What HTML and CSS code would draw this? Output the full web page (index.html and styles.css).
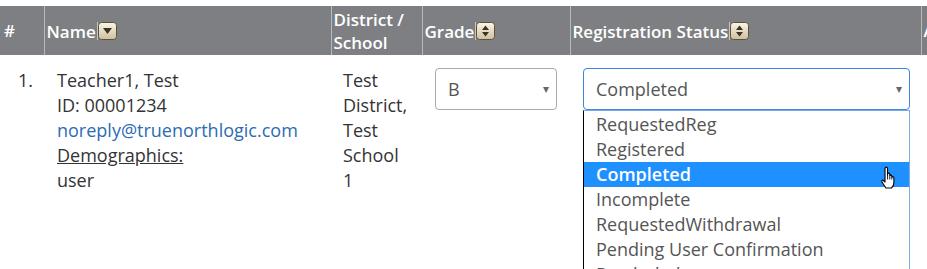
FILE: index.html
```html
<!DOCTYPE html>
<html lang="en">
<head>
    <meta charset="UTF-8">
    <title>Registrations</title>
    <link rel="stylesheet" href="styles.css">
</head>
<body>
    <table class="reg-table">
        <thead>
            <tr>
                <th class="col-num">#</th>
                <th class="col-name"><span class="th-label">Name</span><span class="caret-line"></span><svg class="sort-btn" width="19" height="18" viewBox="0 0 19 18"><defs><linearGradient id="g1" x1="0" y1="0" x2="0" y2="1"><stop offset="0" stop-color="#fbf6e8"/><stop offset="1" stop-color="#cdbf9c"/></linearGradient></defs><rect x="0.5" y="0.5" width="18" height="17" rx="3" fill="url(#g1)" stroke="#5e5138"/><path d="M5 6 L14 6 L9.5 12 Z" fill="#3b3225"/></svg></th>
                <th class="col-district">District / School</th>
                <th class="col-grade"><span class="th-label">Grade</span><span class="caret-line"></span><svg class="sort-btn" width="19" height="18" viewBox="0 0 19 18"><defs><linearGradient id="g2" x1="0" y1="0" x2="0" y2="1"><stop offset="0" stop-color="#fbf6e8"/><stop offset="1" stop-color="#cdbf9c"/></linearGradient></defs><rect x="0.5" y="0.5" width="18" height="17" rx="3" fill="url(#g2)" stroke="#5e5138"/><path d="M6 8 L13 8 L9.5 3.5 Z M6 10 L13 10 L9.5 14.5 Z" fill="#3b3225"/></svg></th>
                <th class="col-status"><span class="th-label">Registration Status</span><span class="caret-line"></span><svg class="sort-btn" width="19" height="18" viewBox="0 0 19 18"><defs><linearGradient id="g3" x1="0" y1="0" x2="0" y2="1"><stop offset="0" stop-color="#fbf6e8"/><stop offset="1" stop-color="#cdbf9c"/></linearGradient></defs><rect x="0.5" y="0.5" width="18" height="17" rx="3" fill="url(#g3)" stroke="#5e5138"/><path d="M6 8 L13 8 L9.5 3.5 Z M6 10 L13 10 L9.5 14.5 Z" fill="#3b3225"/></svg></th>
                <th class="col-action">Actions</th>
            </tr>
        </thead>
        <tbody>
            <tr>
                <td class="cell-num">1.</td>
                <td class="cell-name">
                    Teacher1, Test<br>
                    ID: 00001234<br>
                    <a href="#" class="email">noreply@truenorthlogic.com</a><br>
                    <span class="demo">Demographics:</span><br>
                    user
                </td>
                <td class="cell-district">Test District, Test School 1</td>
                <td class="cell-grade">
                    <div class="fake-select grade-select">B<span class="arrow">&#9662;</span></div>
                </td>
                <td class="cell-status">
                    <div class="status-wrap">
                        <div class="fake-select status-select focused">Completed<span class="arrow">&#9662;</span></div>
                        <ul class="dropdown">
                            <li>RequestedReg</li>
                            <li>Registered</li>
                            <li class="selected">Completed
                                <svg class="hand" width="18" height="24" viewBox="0 0 18 24"><path d="M5.5 1.5 C6.5 0.8 7.5 1.2 7.5 2.5 L7.5 9 L7.8 7.5 C8.5 6.8 9.7 7 9.8 8.2 L9.8 9.5 C10.5 8.8 11.7 9 11.8 10.2 L11.8 11 C12.5 10.4 13.8 10.6 13.9 11.8 L13.9 16.5 C13.9 19 12.5 21 11.5 22 L6 22 C5 20.5 3.5 18.5 2 16 C1.3 14.8 2.3 13.6 3.5 14.5 L5 16 L5 2.5 Z" fill="#fff" stroke="#000" stroke-width="1.1" stroke-linejoin="round"/><path d="M7.6 9 L7.6 13.5 M9.8 9.5 L9.8 13.5 M11.8 11 L11.8 13.5" stroke="#000" stroke-width="0.9"/></svg>
                            </li>
                            <li>Incomplete</li>
                            <li>RequestedWithdrawal</li>
                            <li>Pending User Confirmation</li>
                            <li>Precluded</li>
                        </ul>
                    </div>
                </td>
                <td class="cell-action"></td>
            </tr>
        </tbody>
    </table>
</body>
</html>
```

FILE: styles.css
```css
body {
    margin: 0;
    padding-top: 6px;
    font-family: "Open Sans", Arial, sans-serif;
    font-size: 18px;
    color: #333;
    background-color: white;
    overflow: hidden;
    width: 927px;
    height: 269px;
}
.reg-table {
    border-collapse: collapse;
    table-layout: fixed;
    width: 1050px;
}
.reg-table th,
.reg-table td {
    box-sizing: border-box;
}
.reg-table th {
    background-color: #7e7f83;
    color: white;
    font-weight: 600;
    font-size: 17px;
    line-height: 23px;
    text-align: left;
    vertical-align: middle;
    height: 49px;
    padding: 0 2px;
    border-left: 1px solid #b9babd;
    white-space: nowrap;
    overflow: hidden;
}
.reg-table th:first-child {
    border-left: none;
    padding-left: 4px;
}
.col-num { width: 44px; }
.col-name { width: 287px; }
.col-district { width: 91px; white-space: normal !important; }
.col-grade { width: 148px; }
.col-status { width: 351px; }
.col-action { width: 129px; }
.th-label {
    vertical-align: middle;
}
.caret-line {
    display: inline-block;
    width: 1px;
    height: 18px;
    background-color: #c4c4c6;
    vertical-align: middle;
    margin-left: 1px;
}
.sort-btn {
    vertical-align: middle;
}
.reg-table td {
    vertical-align: top;
    padding: 13px 8px 0 13px;
    line-height: 25px;
}
.reg-table td.cell-num {
    padding-left: 18px;
}
.reg-table td.cell-district {
    padding: 13px 16px 0 12px;
}
.email {
    color: #2b6cb4;
    text-decoration: none;
}
.demo {
    text-decoration: underline;
}
.fake-select {
    box-sizing: border-box;
    height: 42px;
    border: 1px solid #aaa;
    border-radius: 4px;
    padding: 0 12px;
    line-height: 40px;
    color: #555;
    position: relative;
    background-color: white;
}
.grade-select {
    width: 122px;
}
.status-select {
    width: 327px;
}
.focused {
    border-color: #3c85e0;
}
.arrow {
    position: absolute;
    right: 7px;
    top: 0;
    font-size: 12px;
    color: #666;
}
.status-wrap {
    position: relative;
}
.dropdown {
    position: absolute;
    top: 42px;
    left: 0;
    width: 327px;
    box-sizing: border-box;
    margin: 0;
    padding: 1px 0 0;
    list-style: none;
    background-color: white;
    border-left: 1px solid #000;
    border-right: 1px solid #7da9e6;
    border-top: 1px solid #7da9e6;
}
.dropdown li {
    height: 25px;
    line-height: 25px;
    padding-left: 12px;
    color: #555;
    position: relative;
}
.dropdown li.selected {
    background-color: #1e90ff;
    color: white;
    font-weight: 600;
}
.hand {
    position: absolute;
    left: 296px;
    top: 4px;
}
```
